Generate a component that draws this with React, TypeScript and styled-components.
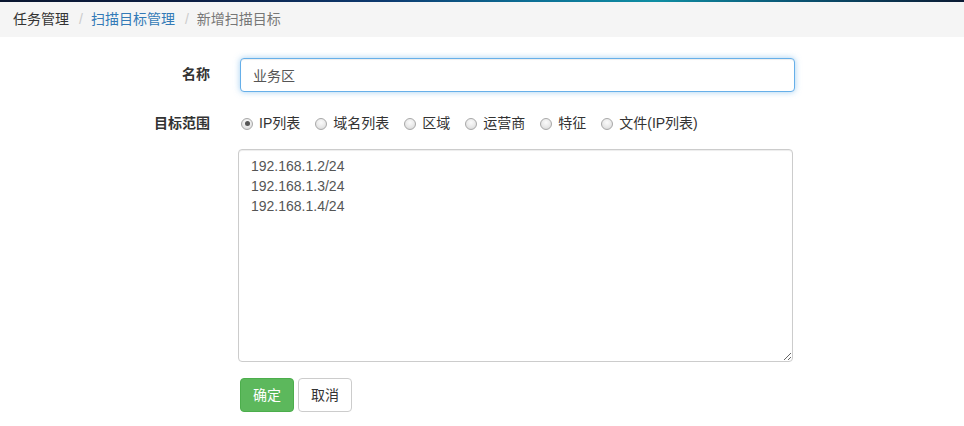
import { FC, useState } from "react";
import styled, { createGlobalStyle } from "styled-components";

const GlobalStyle = createGlobalStyle`
  html, body {
    margin: 0;
    padding: 0;
    background: #fff;
  }
  body {
    font-family: "Liberation Sans", "Noto Sans CJK SC", sans-serif;
    font-size: 14px;
    line-height: 1.42857;
    color: #333;
  }
  * {
    box-sizing: border-box;
  }
`;

const TopStrip = styled.div`
  height: 2px;
  background: linear-gradient(
    90deg,
    #0a1630 0%,
    #0c1f45 20%,
    #0d3a70 40%,
    #0c6f95 55%,
    #0f8ea3 68%,
    #0a5675 82%,
    #0b1a33 100%
  );
`;

const Breadcrumb = styled.ol`
  display: flex;
  align-items: center;
  height: 35px;
  margin: 0;
  padding: 0 13px;
  list-style: none;
  background: #f5f5f5;
`;

const Crumb = styled.li<{ $kind: "plain" | "link" | "active" }>`
  color: ${(p) =>
    p.$kind === "link" ? "#337ab7" : p.$kind === "active" ? "#777" : "#333"};
  cursor: ${(p) => (p.$kind === "link" ? "pointer" : "default")};

  &:not(:first-child)::before {
    content: "/";
    color: #ccc;
    padding: 0 8px 0 10px;
  }
`;

const Form = styled.form`
  display: grid;
  grid-template-columns: 210px 555px;
  column-gap: 30px;
  padding-top: 21px;
`;

const Label = styled.label`
  font-weight: bold;
  text-align: right;
  padding-top: 7px;
  height: 34px;
`;

const Field = styled.div<{ $gap?: number }>`
  margin-bottom: ${(p) => p.$gap ?? 15}px;
`;

const TextInput = styled.input`
  display: block;
  width: 555px;
  height: 34px;
  padding: 6px 12px;
  font: inherit;
  color: #555;
  background: #fff;
  border: 1px solid #66afe9;
  border-radius: 4px;
  outline: 0;
  box-shadow: inset 0 1px 1px rgba(0, 0, 0, 0.075),
    0 0 6px rgba(102, 175, 233, 0.6);
`;

const RadioGroup = styled.div`
  display: flex;
  align-items: center;
  height: 34px;
  padding-left: 1px;
`;

const RadioItem = styled.label`
  display: flex;
  align-items: center;
  margin-right: 15px;
  color: #333;
  cursor: pointer;
`;

const RadioDot = styled.span<{ $checked: boolean }>`
  position: relative;
  flex: none;
  width: 12px;
  height: 12px;
  margin-right: 6px;
  border-radius: 50%;
  border: 1px solid #a8a8a8;
  background: radial-gradient(circle at 50% 35%, #fbfbfb 0%, #e8e8e8 55%, #d2d2d2 100%);

  &::after {
    content: "";
    display: ${(p) => (p.$checked ? "block" : "none")};
    position: absolute;
    left: 2.5px;
    top: 2.5px;
    width: 5px;
    height: 5px;
    border-radius: 50%;
    background: #555;
  }
`;

const TextArea = styled.textarea`
  display: block;
  width: 555px;
  height: 213px;
  margin-left: -2px;
  padding: 6px 12px;
  font: inherit;
  line-height: 20px;
  color: #555;
  background: #fff;
  border: 1px solid #ccc;
  border-radius: 4px;
  outline: 0;
  resize: vertical;
  box-shadow: inset 0 1px 1px rgba(0, 0, 0, 0.075);
`;

const Actions = styled.div`
  display: flex;
  gap: 4px;
`;

const Button = styled.button<{ $variant: "success" | "default" }>`
  height: 34px;
  padding: 6px 12px;
  font: inherit;
  line-height: 20px;
  border-radius: 4px;
  cursor: pointer;
  color: ${(p) => (p.$variant === "success" ? "#fff" : "#333")};
  background: ${(p) => (p.$variant === "success" ? "#5cb85c" : "#fff")};
  border: 1px solid ${(p) => (p.$variant === "success" ? "#4cae4c" : "#ccc")};
`;

const scopes = ["IP列表", "域名列表", "区域", "运营商", "特征", "文件(IP列表)"];

const App: FC = () => {
  const [name, setName] = useState<string>("业务区");
  const [scope, setScope] = useState<string>(scopes[0]);

  return (
    <>
      <GlobalStyle />
      <TopStrip />
      <Breadcrumb>
        <Crumb $kind="plain">任务管理</Crumb>
        <Crumb $kind="link">扫描目标管理</Crumb>
        <Crumb $kind="active">新增扫描目标</Crumb>
      </Breadcrumb>
      <Form onSubmit={(e) => e.preventDefault()}>
        <Label>名称</Label>
        <Field>
          <TextInput
            autoFocus
            value={name}
            onChange={(e) => setName(e.target.value)}
          />
        </Field>

        <Label>目标范围</Label>
        <Field $gap={8}>
          <RadioGroup>
            {scopes.map((s) => (
              <RadioItem key={s} onClick={() => setScope(s)}>
                <RadioDot $checked={scope === s} />
                {s}
              </RadioItem>
            ))}
          </RadioGroup>
        </Field>

        <span />
        <Field $gap={16}>
          <TextArea
            defaultValue={"192.168.1.2/24\n192.168.1.3/24\n192.168.1.4/24"}
          />
        </Field>

        <span />
        <Actions>
          <Button type="submit" $variant="success">
            确定
          </Button>
          <Button type="button" $variant="default">
            取消
          </Button>
        </Actions>
      </Form>
    </>
  );
};

export default App;
